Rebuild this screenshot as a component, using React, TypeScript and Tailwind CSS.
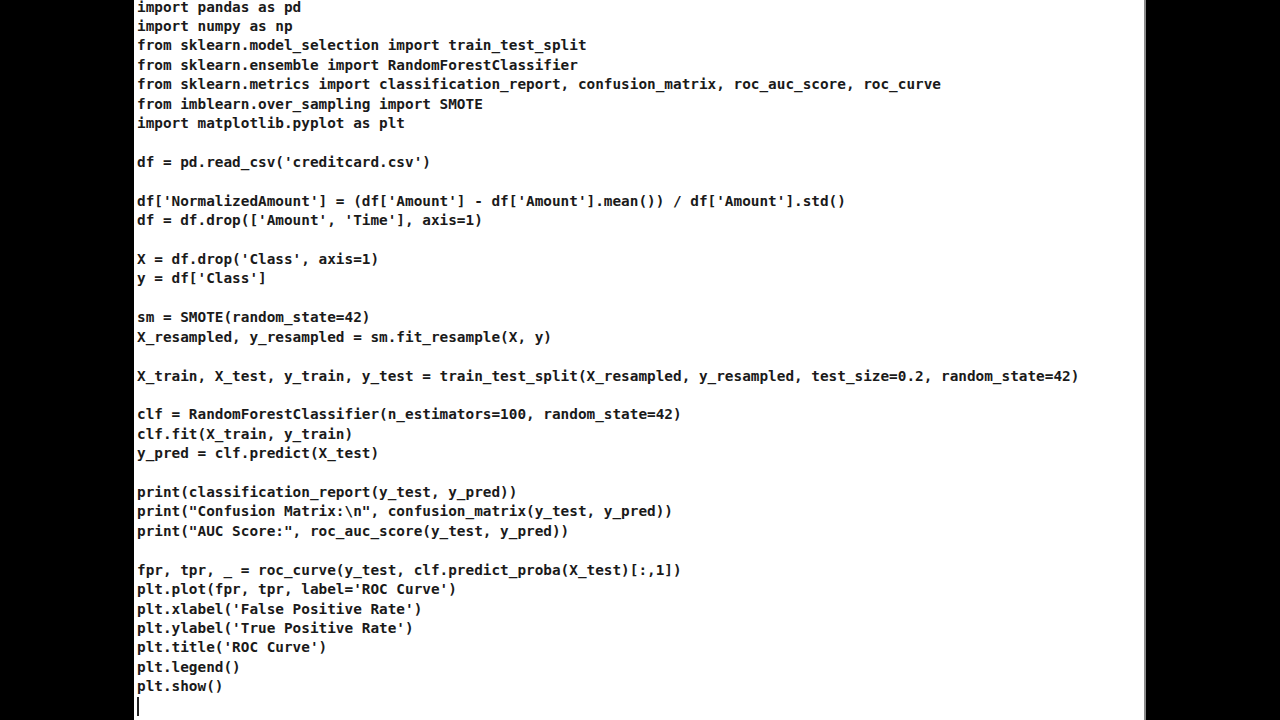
const CODE_LINES: string[] = [
  "import pandas as pd",
  "import numpy as np",
  "from sklearn.model_selection import train_test_split",
  "from sklearn.ensemble import RandomForestClassifier",
  "from sklearn.metrics import classification_report, confusion_matrix, roc_auc_score, roc_curve",
  "from imblearn.over_sampling import SMOTE",
  "import matplotlib.pyplot as plt",
  "",
  "df = pd.read_csv('creditcard.csv')",
  "",
  "df['NormalizedAmount'] = (df['Amount'] - df['Amount'].mean()) / df['Amount'].std()",
  "df = df.drop(['Amount', 'Time'], axis=1)",
  "",
  "X = df.drop('Class', axis=1)",
  "y = df['Class']",
  "",
  "sm = SMOTE(random_state=42)",
  "X_resampled, y_resampled = sm.fit_resample(X, y)",
  "",
  "X_train, X_test, y_train, y_test = train_test_split(X_resampled, y_resampled, test_size=0.2, random_state=42)",
  "",
  "clf = RandomForestClassifier(n_estimators=100, random_state=42)",
  "clf.fit(X_train, y_train)",
  "y_pred = clf.predict(X_test)",
  "",
  "print(classification_report(y_test, y_pred))",
  'print("Confusion Matrix:\\n", confusion_matrix(y_test, y_pred))',
  'print("AUC Score:", roc_auc_score(y_test, y_pred))',
  "",
  "fpr, tpr, _ = roc_curve(y_test, clf.predict_proba(X_test)[:,1])",
  "plt.plot(fpr, tpr, label='ROC Curve')",
  "plt.xlabel('False Positive Rate')",
  "plt.ylabel('True Positive Rate')",
  "plt.title('ROC Curve')",
  "plt.legend()",
  "plt.show()",
];

export default function App() {
  return (
    <div className="flex h-[720px] w-[1280px] overflow-hidden bg-black">
      {/* left letterbox */}
      <div className="w-[134px] shrink-0 bg-black" />

      {/* editor page */}
      <div className="w-[1012px] shrink-0 overflow-hidden border-r-2 border-[#8a8a8a] bg-white pl-[3px]">
        <pre className="mt-[-2.5px] font-['DejaVu_Sans_Mono',monospace] text-[14.36px] leading-[19.43px] font-bold text-[#1a1a1a]">
          {CODE_LINES.map((line, i) => (
            <div key={i} className="h-[19.43px] whitespace-pre">
              {line}
            </div>
          ))}
          {/* text cursor */}
          <div className="flex h-[19.43px] items-center">
            <span className="h-[19px] w-[1.5px] bg-[#222]" />
          </div>
        </pre>
      </div>

      {/* right letterbox */}
      <div className="flex-1 bg-black" />
    </div>
  );
}
